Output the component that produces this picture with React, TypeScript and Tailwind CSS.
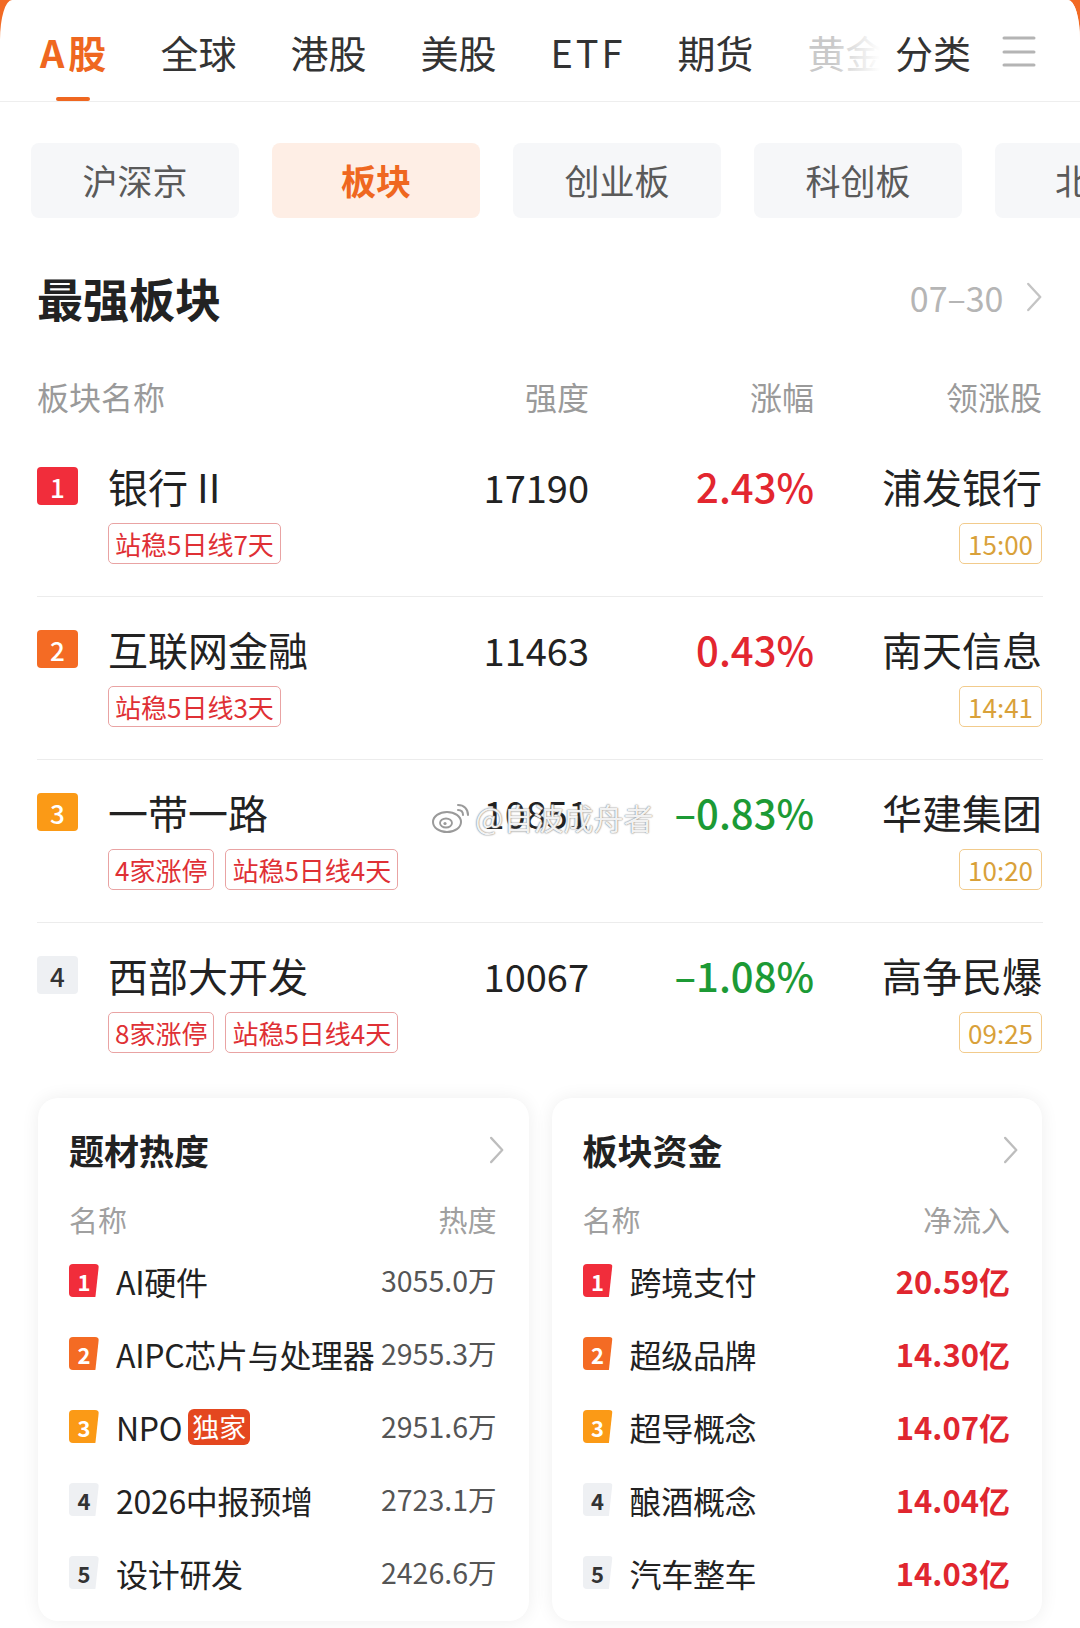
import React from "react";

const FONT = "font-['Noto_Sans_CJK_SC','Noto_Sans',sans-serif]";

const Chevron = ({ h = 30, color = "#bdbdbd" }: { h?: number; color?: string }) => (
  <svg width={h * 0.55} height={h} viewBox="0 0 16 30" fill="none">
    <polyline points="2,2 14,15 2,28" stroke={color} strokeWidth="2.4" strokeLinecap="round" strokeLinejoin="round" />
  </svg>
);

const rankBg = [
  "bg-[#f12d3b] text-white",
  "bg-[#f46b24] text-white",
  "bg-[#fb9a16] text-white",
  "bg-[#eef0f3] text-[#333]",
  "bg-[#eef0f3] text-[#333]",
];

type Row = {
  name: string;
  strength: string;
  change: string;
  up: boolean;
  leader: string;
  time: string;
  tags: string[];
};

const rows: Row[] = [
  { name: "银行 II", strength: "17190", change: "2.43%", up: true, leader: "浦发银行", time: "15:00", tags: ["站稳5日线7天"] },
  { name: "互联网金融", strength: "11463", change: "0.43%", up: true, leader: "南天信息", time: "14:41", tags: ["站稳5日线3天"] },
  { name: "一带一路", strength: "10851", change: "–0.83%", up: false, leader: "华建集团", time: "10:20", tags: ["4家涨停", "站稳5日线4天"] },
  { name: "西部大开发", strength: "10067", change: "–1.08%", up: false, leader: "高争民爆", time: "09:25", tags: ["8家涨停", "站稳5日线4天"] },
];

const heat = [
  { name: "AI硬件", v: "3055.0万" },
  { name: "AIPC芯片与处理器", v: "2955.3万" },
  { name: "NPO", v: "2951.6万", badge: "独家" },
  { name: "2026中报预增", v: "2723.1万" },
  { name: "设计研发", v: "2426.6万" },
];

const funds = [
  { name: "跨境支付", v: "20.59亿" },
  { name: "超级品牌", v: "14.30亿" },
  { name: "超导概念", v: "14.07亿" },
  { name: "酿酒概念", v: "14.04亿" },
  { name: "汽车整车", v: "14.03亿" },
];

const chips = ["沪深京", "板块", "创业板", "科创板", "北证"];

function SmallRank({ n }: { n: number }) {
  return (
    <div
      className={`shrink-0 w-[30px] h-[33px] rounded-[4px] flex items-center justify-center text-[22px] font-bold leading-none ${rankBg[n]} [clip-path:polygon(0_0,100%_0,88%_100%,0_100%)]`}
    >
      {n + 1}
    </div>
  );
}

function Card({ title, colName, colVal, items, red }: { title: string; colName: string; colVal: string; items: { name: string; v: string; badge?: string }[]; red?: boolean }) {
  return (
    <div className="w-[491px] h-[523px] rounded-[20px] bg-white shadow-[0_0_18px_rgba(0,0,0,0.07)] pl-[31px] pr-[32px] pt-[30px]">
      <div className="flex items-center justify-between h-[44px]">
        <span className="text-[35px] font-bold text-[#222] leading-[44px]">{title}</span>
        <span className="mr-[-8px] flex items-center">
          <Chevron h={28} />
        </span>
      </div>
      <div className="flex items-center justify-between h-[36px] mt-[30px] text-[29px] text-[#a0a0a0]">
        <span>{colName}</span>
        <span>{colVal}</span>
      </div>
      <div className="mt-[6px]">
        {items.map((it, i) => (
          <div key={i} className="flex items-center h-[73px]">
            <SmallRank n={i} />
            <span className="ml-[17px] text-[32px] text-[#222] whitespace-nowrap leading-none tracking-[-0.3px]">{it.name}</span>
            {it.badge && (
              <span className="ml-[6px] h-[36px] px-[4px] rounded-[6px] bg-[#e4471f] text-white text-[27px] leading-[36px]">{it.badge}</span>
            )}
            <span
              className={`ml-auto whitespace-nowrap leading-none ${red ? "text-[31px] text-[#e0262f] font-semibold" : "text-[28.5px] text-[#555]"}`}
            >
              {it.v}
            </span>
          </div>
        ))}
      </div>
    </div>
  );
}

function Tab({ children, active, faded }: { children: React.ReactNode; active?: boolean; faded?: boolean }) {
  return (
    <div className="flex flex-col items-center pt-[27px] shrink-0">
      <span
        className={`h-[50px] leading-[50px] text-[38px] ${
          active ? "text-[#ef6720] font-bold" : faded ? "text-[#c9c9c9]" : "text-[#333]"
        }`}
      >
        {children}
      </span>
      <span className={`mt-[20px] h-[4px] w-[34px] rounded-full ${active ? "bg-[#ef6720]" : "bg-transparent"}`} />
    </div>
  );
}

export default function App() {
  return (
    <div className={`${FONT} w-[1080px] min-h-[1628px] bg-[#f26a24]`}>
      <div className="relative bg-white min-h-[1628px] rounded-tl-[12px_40px] rounded-tr-[12px_40px] overflow-hidden">
        {/* Top tabs */}
        <div className="relative h-[102px] border-b border-[#eeeeee] overflow-hidden">
          <div className="flex gap-[54px] pl-[40px] whitespace-nowrap">
            <Tab active>
              <span className="tracking-[4px]">A</span>股
            </Tab>
            <Tab>全球</Tab>
            <Tab>港股</Tab>
            <Tab>美股</Tab>
            <Tab>
              <span className="tracking-[3px] mr-[-2px]">ETF</span>
            </Tab>
            <Tab>期货</Tab>
            <Tab faded>黄金</Tab>
          </div>
          <div className="absolute right-0 top-0 h-[101px] flex">
            <div className="w-[48px] h-full bg-linear-to-r from-white/0 to-white" />
            <div className="bg-white h-full flex items-start pt-[27px] pl-[15px] pr-[44px]">
              <span className="h-[50px] leading-[50px] text-[38px] text-[#333]">分类</span>
              <svg className="ml-[31px] mt-[8px]" width="34" height="34" viewBox="0 0 34 34">
                <line x1="2" y1="3" x2="32" y2="3" stroke="#b4b4b4" strokeWidth="3" strokeLinecap="round" />
                <line x1="2" y1="17" x2="32" y2="17" stroke="#b4b4b4" strokeWidth="3" strokeLinecap="round" />
                <line x1="2" y1="30" x2="32" y2="30" stroke="#b4b4b4" strokeWidth="3" strokeLinecap="round" />
              </svg>
            </div>
          </div>
        </div>

        {/* Chips */}
        <div className="flex gap-[33px] pl-[31px] mt-[41px] overflow-hidden whitespace-nowrap">
          {chips.map((c, i) => (
            <div
              key={c}
              className={`shrink-0 w-[208px] h-[75px] rounded-[8px] flex items-center justify-center text-[35px] ${
                i === 1 ? "bg-[#feeee5] text-[#ef6720] font-bold" : "bg-[#f6f7f9] text-[#5a5a5a]"
              } ${i === 4 ? "justify-start pl-[60px]" : ""}`}
            >
              {c}
            </div>
          ))}
        </div>

        {/* Strongest sectors */}
        <div className="px-[37px]">
          <div className="flex items-center justify-between h-[56px] mt-[51px]">
            <span className="text-[46px] font-bold text-[#222] leading-[56px]">最强板块</span>
            <span className="flex items-center gap-[22px] text-[34px] text-[#b5b5b5] mr-[1px]">
              07–30
              <Chevron h={30} color="#c4c4c4" />
            </span>
          </div>

          <div className="grid grid-cols-[402px_150px_225px_228px] items-center h-[40px] mt-[47px] text-[32px] text-[#9a9a9a]">
            <span>板块名称</span>
            <span className="text-right">强度</span>
            <span className="text-right">涨幅</span>
            <span className="text-right">领涨股</span>
          </div>

          {rows.map((r, i) => (
            <div
              key={r.name}
              className={`grid grid-cols-[402px_150px_225px_228px] ${i > 0 ? "border-t border-[#ececec] pt-[27px]" : "pt-[49px]"} ${
                i < rows.length - 1 ? "pb-[32px]" : "pb-0"
              }`}
            >
              <div className="flex items-center h-[50px]">
                <div className={`w-[41px] h-[38px] rounded-[4px] flex items-center justify-center text-[26px] font-medium ${rankBg[i]}`}>
                  {i + 1}
                </div>
                <span className="ml-[30px] text-[40px] text-[#222] leading-none whitespace-nowrap">{r.name}</span>
              </div>
              <div className="h-[50px] flex items-center justify-end text-[38px] text-[#222]">{r.strength}</div>
              <div
                className={`h-[50px] flex items-center justify-end text-[40px] font-medium ${r.up ? "text-[#e3262f]" : "text-[#1c9a35]"}`}
              >
                {r.change}
              </div>
              <div className="h-[50px] flex items-center justify-end text-[40px] text-[#222] whitespace-nowrap">{r.leader}</div>

              <div className="col-span-3 flex gap-[11px] pl-[71px] mt-[12px]">
                {r.tags.map((t) => (
                  <span
                    key={t}
                    className="h-[41px] px-[6px] border border-[#e9a3a3] rounded-[5px] text-[26px] leading-[39px] text-[#df3035] whitespace-nowrap"
                  >
                    {t}
                  </span>
                ))}
              </div>
              <div className="flex justify-end mt-[12px]">
                <span className="h-[41px] px-[8px] border border-[#f2cb8c] rounded-[5px] text-[26px] leading-[39px] text-[#d9a13a]">
                  {r.time}
                </span>
              </div>
            </div>
          ))}
        </div>

        {/* Cards */}
        <div className="flex gap-[23px] px-[38px] mt-[45px] pb-[6px]">
          <Card title="题材热度" colName="名称" colVal="热度" items={heat} />
          <Card title="板块资金" colName="名称" colVal="净流入" items={funds} red />
        </div>

        {/* Watermark */}
        <div className="absolute left-[431px] top-[795px] flex items-center gap-[4px] pointer-events-none">
          <svg width="40" height="34" viewBox="0 0 40 34" fill="none">
            <ellipse cx="16" cy="21" rx="14" ry="10" stroke="#9a9a9a" strokeWidth="2" fill="rgba(255,255,255,0.85)" />
            <ellipse cx="15" cy="22" rx="6" ry="4.5" stroke="#9a9a9a" strokeWidth="1.8" />
            <circle cx="14" cy="22.5" r="1.6" fill="#9a9a9a" />
            <path d="M27 4 C33 4 37 8 37 14" stroke="#9a9a9a" strokeWidth="2" strokeLinecap="round" />
            <path d="M27 9 C30 9 32 11 32 14" stroke="#9a9a9a" strokeWidth="2" strokeLinecap="round" />
          </svg>
          <span className="text-[30px] text-white/90 [text-shadow:0_0_1px_#777,0_0_2px_#999] whitespace-nowrap">@自波成舟者</span>
        </div>
      </div>
    </div>
  );
}
